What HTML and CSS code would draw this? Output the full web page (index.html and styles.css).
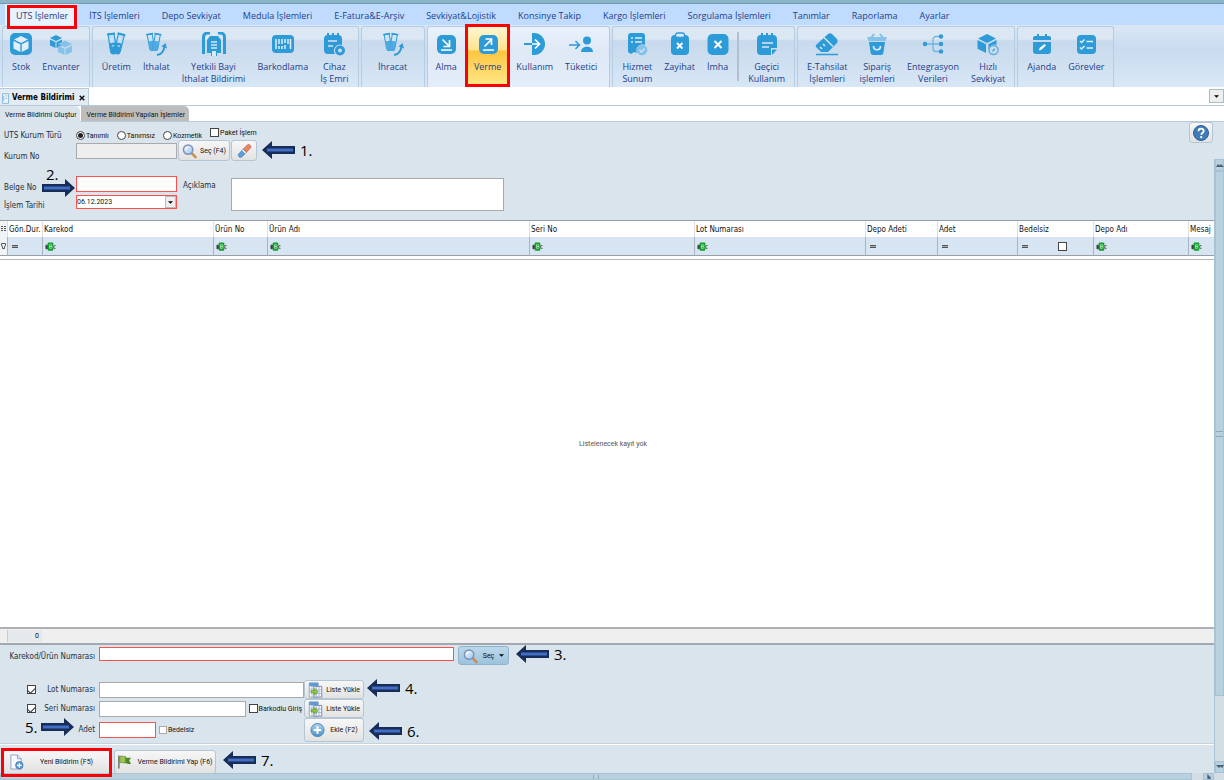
FILE: index.html
```html
<!DOCTYPE html>
<html lang="tr">
<head>
	<meta charset="utf-8">
	<title>Verme Bildirimi</title>
	<link rel="stylesheet" href="styles.css">
</head>
<body>
	<!-- shared drawings -->
	<svg class="defs" width="0" height="0" aria-hidden="true">
		<defs>
			<linearGradient id="lens" x1="0" y1="0" x2="1" y2="1"><stop offset="0" stop-color="#f4faff"/><stop offset="1" stop-color="#9cc3ee"/></linearGradient>
			<linearGradient id="ball" x1="0" y1="0" x2="0" y2="1"><stop offset="0" stop-color="#a9d3ef"/><stop offset="1" stop-color="#4c92c9"/></linearGradient>
			<symbol id="search" viewBox="0 0 16 16"><path d="M10 10l4.500 4.500" stroke="#c98d4a" stroke-width="2.600" stroke-linecap="round"/><circle cx="6.500" cy="6.500" r="5" fill="url(#lens)" stroke="#7d92bd" stroke-width="1.600"/><path d="M4 6.500a2.500 2.500 0 0 1 2.500-2.500" fill="none" stroke="#fff" stroke-width="1.200"/></symbol>
			<symbol id="list" viewBox="0 0 16 18"><path d="M1 1h10v16H1z" fill="#fff" stroke="#8fa0bd"/><path d="M1 1h10v4H1z" fill="#5c9bd4"/><path d="M6 5h9v12H6z" fill="#f4f7fd" stroke="#6f83ad"/><path d="M6 9h9M6 13h9M9 5v12M12 5v12M1 8h5M1 11h5M4 5v12" stroke="#93a6cc" stroke-width=".8"/><path d="M3 9.500h4v-2.500l4 4-4 4v-2.500H3z" fill="#8ac43a" stroke="#5c8e20" stroke-width=".6"/></symbol>
			<symbol id="abc" viewBox="0 0 12 9"><path d="M1 3h2v4H1zM9.500 3.500h2M9.500 3.500v3M9.500 6.500h2" fill="#444" stroke="#333" stroke-width=".8"/><rect x="3" y="0" width="6" height="9" rx="1" fill="#12a02c"/><path d="M5 2.500h1.500a1 1 0 0 1 0 2h-1.500zM5 4.500h1.700a1 1 0 0 1 0 2H5z" fill="none" stroke="#b9f0c0" stroke-width=".8"/></symbol>
			<symbol id="arrow" viewBox="0 0 33 18"><path d="M0 9L10 0v5h23v8H10v5z" fill="#172c56"/><path d="M5 7.500h26v3H5z" fill="#416fc6"/></symbol>
			<symbol id="tubes" viewBox="0 0 24 24"><g transform="rotate(-8 8 12)"><path d="M5.500 2h6v17a3 3 0 0 1-6 0z" fill="#c3dff3" stroke="#2d9bd8" stroke-width="1.200"/><path d="M5.500 11h6v8a3 3 0 0 1-6 0z" fill="#2d9bd8"/><path d="M4.500 2h8" stroke="#2d9bd8" stroke-width="2"/><path d="M6.500 7h2.500M7.500 14h2.500" stroke="#e3eefa" stroke-width="1"/></g><g transform="rotate(14 15 12)"><path d="M12 2h6v17a3 3 0 0 1-6 0z" fill="#c3dff3" stroke="#2d9bd8" stroke-width="1.200"/><path d="M12 11h6v8a3 3 0 0 1-6 0z" fill="#2d9bd8"/><path d="M11 2h8" stroke="#2d9bd8" stroke-width="2"/><path d="M13 7h2.500M14 14h2.500" stroke="#e3eefa" stroke-width="1"/></g></symbol>
			<symbol id="tubes-arrow" viewBox="0 0 24 24"><g transform="rotate(-10 7 10)"><path d="M4.500 2h5v14a2.500 2.500 0 0 1-5 0z" fill="#cfe5f5" stroke="#2d9bd8"/><path d="M4.500 9h5v7a2.500 2.500 0 0 1-5 0z" fill="#4fabe0"/><path d="M3.500 2h7" stroke="#2d9bd8" stroke-width="1.600"/></g><g transform="rotate(10 12 10)"><path d="M10 2h5v14a2.500 2.500 0 0 1-5 0z" fill="#cfe5f5" stroke="#2d9bd8"/><path d="M10 9h5v7a2.500 2.500 0 0 1-5 0z" fill="#4fabe0"/><path d="M9 2h7" stroke="#2d9bd8" stroke-width="1.600"/></g><path d="M13 23c4-.5 7-4 7.500-9" fill="none" stroke="#2d9bd8" stroke-width="2"/><path d="M17.500 14.500L21.500 11l1.500 5.500z" fill="#2d9bd8"/></symbol>
		</defs>
	</svg>

	<div class="app">
		<nav class="menu">
			<button class="menu-tab is-active is-marked">UTS İşlemler</button>
			<button class="menu-tab">İTS İşlemleri</button>
			<button class="menu-tab">Depo Sevkiyat</button>
			<button class="menu-tab">Medula İşlemleri</button>
			<button class="menu-tab">E-Fatura&amp;E-Arşiv</button>
			<button class="menu-tab">Sevkiyat&amp;Lojistik</button>
			<button class="menu-tab">Konsinye Takip</button>
			<button class="menu-tab">Kargo İşlemleri</button>
			<button class="menu-tab">Sorgulama İşlemleri</button>
			<button class="menu-tab">Tanımlar</button>
			<button class="menu-tab">Raporlama</button>
			<button class="menu-tab">Ayarlar</button>
		</nav>

		<div class="ribbon">
			<div class="group">
				<button class="tool"><svg viewBox="0 0 24 24"><rect x="1" y="1" width="22" height="22" rx="5" fill="#2d9bd8"/><path d="M12 4l7 3.500-7 3.500-7-3.500zM4.500 9l6.800 3.300V20L4.500 16.500zM19.500 9l-6.800 3.300V20l6.800-3.500z" fill="#e3eefa"/></svg>Stok</button>
				<button class="tool"><svg viewBox="0 0 24 24"><path d="M7 3l6 3-6 3-6-3zM1 7.500l5.500 2.700V16L1 13.500zM13 7.500l-5.500 2.700V16l5.500-2.500z" fill="#2d9bd8"/><path d="M16 8.500l7 3.500-7 3.500L9 12zM9 13.500l6.500 3.200V23L9 20zM23 13.500l-6.500 3.200V23l6.500-3z" fill="#86c1e8"/></svg>Envanter</button>
			</div>
			<div class="group">
				<button class="tool"><svg><use href="#tubes"/></svg>Üretim</button>
				<button class="tool"><svg><use href="#tubes-arrow"/></svg>İthalat</button>
				<button class="tool"><svg viewBox="0 0 24 24"><path d="M1.500 22V5a4 4 0 0 1 4-4H8M22.500 22V5a4 4 0 0 0-4-4H16" fill="none" stroke="#2d9bd8" stroke-width="3"/><path d="M5 21V8l3-4h8l3 4v13h-4v3H9v-3z" fill="#2d9bd8"/><path d="M9 10h6M9 13h6M9 16h6" stroke="#dbe8f6" stroke-width="1.500"/><path d="M10 19h4v5h-4z" fill="#dbe8f6"/></svg>Yetkili Bayi<br>İthalat Bildirimi</button>
				<button class="tool"><svg viewBox="0 0 24 24"><rect x="1" y="3" width="22" height="18" rx="4" fill="#2d9bd8"/><path d="M5 7v10M8 7v5M8 14v3M11 7v5M11 14v3M14 7v4M14 13v4M17 7v5M19.500 7v10" stroke="#e3eefa" stroke-width="1.500"/></svg>Barkodlama</button>
				<button class="tool"><svg viewBox="0 0 24 24"><path d="M2 7a4 4 0 0 1 4-4h10a4 4 0 0 1 4 4v6a6 6 0 0 0-7 9H6a4 4 0 0 1-4-4z" fill="#2d9bd8"/><path d="M6 1v4M11 1v4M16 1v4" stroke="#2d9bd8" stroke-width="2"/><path d="M6 9h9M6 14h5" stroke="#d3e4f5" stroke-width="1.500"/><circle cx="18" cy="18.500" r="3.500" fill="none" stroke="#2d9bd8" stroke-width="3"/></svg>Cihaz<br>İş Emri</button>
			</div>
			<div class="group group-single">
				<button class="tool"><svg><use href="#tubes-arrow"/></svg>İhracat</button>
			</div>
			<div class="group group-light">
				<button class="tool"><svg viewBox="0 0 24 24"><rect x="3" y="3" width="19" height="19" rx="5" fill="#2d9bd8"/><path d="M8.500 7.500l7 7M15.500 8v6.500H9.500M7 18h11" fill="none" stroke="#fff" stroke-width="1.700"/></svg>Alma</button>
				<button class="tool is-active is-marked"><svg viewBox="0 0 24 24"><rect x="3" y="3" width="19" height="19" rx="5" fill="#2d9bd8"/><path d="M8.500 14.500l7-7M9.500 7h6v6M7 18h11" fill="none" stroke="#fff" stroke-width="1.700"/></svg>Verme</button>
				<button class="tool"><svg viewBox="0 0 24 24"><path d="M9 1h2a11 11 0 0 1 0 22H9z" fill="#2d9bd8"/><path d="M1 12h8" stroke="#2d9bd8" stroke-width="2"/><path d="M9 12h7M12 7.500l4.500 4.500-4.500 4.500" fill="none" stroke="#fff" stroke-width="1.700"/></svg>Kullanım</button>
				<button class="tool"><svg viewBox="0 0 24 24"><path d="M0 13h10M6.500 9l4 4-4 4" fill="none" stroke="#2d9bd8" stroke-width="1.500"/><circle cx="18" cy="8.500" r="4" fill="#2d9bd8"/><path d="M12 20c0-7 12-7 12 0z" fill="#2d9bd8"/></svg>Tüketici</button>
			</div>
			<div class="group">
				<button class="tool"><svg viewBox="0 0 24 24"><path d="M3 4a3 3 0 0 1 3-3h11a3 3 0 0 1 3 3v9a6 6 0 0 0-8 8l-3-1-3 2-3-2z" fill="#2d9bd8"/><path d="M6 6h2M10 6h7M6 10h2M10 10h7" stroke="#e3eefa" stroke-width="1.400"/><circle cx="17" cy="18" r="5.300" fill="#86c1e8"/><path d="M14.500 18l2 2 3-3.500" fill="none" stroke="#d3e4f5" stroke-width="1.300"/></svg>Hizmet<br>Sunum</button>
				<button class="tool"><svg viewBox="0 0 24 24"><rect x="3" y="3" width="18" height="20" rx="4" fill="#2d9bd8"/><rect x="7.500" y="1" width="9" height="4.500" rx="2" fill="#dbe8f6" stroke="#2d9bd8" stroke-width="1.300"/><path d="M9 11l5.500 5.500M14.500 11L9 16.500" stroke="#fff" stroke-width="1.800"/></svg>Zayihat</button>
				<button class="tool"><svg viewBox="0 0 24 24"><rect x="1.500" y="2" width="21" height="21" rx="5" fill="#2d9bd8"/><path d="M8.500 9l7 7M15.500 9l-7 7" stroke="#fff" stroke-width="2"/></svg>İmha</button>
				<span class="divider"></span>
				<button class="tool"><svg viewBox="0 0 24 24"><path d="M2 7a4 4 0 0 1 4-4h12a4 4 0 0 1 4 4v9h-6v7H6a4 4 0 0 1-4-4z" fill="#2d9bd8"/><path d="M7 1v4M12 1v4M17 1v4" stroke="#2d9bd8" stroke-width="2"/><path d="M7 11h11M7 15h7" stroke="#dbe8f6" stroke-width="1.600"/><path d="M17 23v-5.500h5z" fill="#2d9bd8"/></svg>Geçici<br>Kullanım</button>
			</div>
			<div class="group">
				<button class="tool"><svg viewBox="0 0 24 24"><path d="M1 13L13 2q2-1.500 4 0l5 5q1.500 2 0 4l-9 9H6l-5-5q-.5-1 0-2z" fill="#2d9bd8"/><path d="M9 5.500l9 9M5 15l2 2M8 12l2 2" stroke="#d3e4f5" stroke-width="1.500"/><path d="M1 22.500h22" stroke="#2d9bd8" stroke-width="1.500"/></svg>E-Tahsilat<br>İşlemleri</button>
				<button class="tool"><svg viewBox="0 0 24 24"><path d="M6 6l3-4M18 6l-3-4" stroke="#7fbfe8" stroke-width="2"/><path d="M2 5h20l-1.500 4h-17z" fill="#86c1e8"/><path d="M4 10h16l-1.500 10a3 3 0 0 1-3 3h-7a3 3 0 0 1-3-3z" fill="#2d9bd8"/><path d="M8.500 14c0 5 7 5 7 0" fill="none" stroke="#e3eefa" stroke-width="1.700"/></svg>Sipariş<br>işlemleri</button>
				<button class="tool"><svg viewBox="0 0 24 24"><path d="M4 12h17M20 4.500h-5a3 3 0 0 0-3 3v9a3 3 0 0 0 3 3h5" fill="none" stroke="#6bb5e3" stroke-width="1.300"/><g fill="#2d9bd8"><circle cx="4" cy="12" r="2.200"/><circle cx="20" cy="4.500" r="2.200"/><circle cx="20" cy="12" r="2.200"/><circle cx="20" cy="19.500" r="2.200"/></g></svg>Entegrasyon<br>Verileri</button>
				<button class="tool"><svg viewBox="0 0 24 24"><path d="M11 2l9 4.500-9 4.500-9-4.500zM1.500 8l8.500 4.300V21l-8.500-4.300zM20.500 8v5a6 6 0 0 0-8 5.500V12.300z" fill="#2d9bd8"/><circle cx="17.500" cy="18" r="4.500" fill="#c8ddf2" stroke="#5fb0e1" stroke-width="1.500"/><path d="M16 20l1-2.500 2.300-1.500-1 2.500z" fill="#2d9bd8"/></svg>Hızlı<br>Sevkiyat</button>
			</div>
			<div class="group">
				<button class="tool"><svg viewBox="0 0 24 24"><path d="M3 6a2 2 0 0 1 2-2h14a2 2 0 0 1 2 2v2H3zM3 10h18v9a3 3 0 0 1-3 3H6a3 3 0 0 1-3-3z" fill="#2d9bd8"/><path d="M8 2v3M16 2v3" stroke="#2d9bd8" stroke-width="2"/><path d="M9 18.500l.5-2.500 5-4 1.500 1.500-5 4.500z" fill="#fff"/></svg>Ajanda</button>
				<button class="tool"><svg viewBox="0 0 24 24"><rect x="3" y="3" width="19" height="19" rx="4" fill="#2d9bd8"/><path d="M6 9l1.500 1.500L10.500 7.500M6 15.500L7.500 17l3-3M12.500 9.500H19M12.500 16H19" fill="none" stroke="#e3eefa" stroke-width="1.500"/></svg>Görevler</button>
			</div>
		</div>

		<div class="documents">
			<div class="document">
				<svg viewBox="0 0 8 12"><path d="M.5.5h7v11h-7z" fill="#eef6ff" stroke="#7fb2de"/><path d="M2 3v6M4 3h2M4 6h2" stroke="#7fb2de"/></svg>
				<b>Verme Bildirimi</b>
				<button class="close" aria-label="Kapat"><svg viewBox="0 0 6 6"><path d="M.7.7l4.600 4.600M5.300.7L.7 5.300" stroke="#111" stroke-width="1.400"/></svg></button>
			</div>
			<button class="documents-more" aria-label="Pencereler"><svg viewBox="0 0 6 3"><path d="M0 0h6L3 3z"/></svg></button>
		</div>

		<div class="pages">
			<button class="page-tab is-active">Verme Bildirimi Oluştur</button>
			<button class="page-tab">Verme Bildirimi Yapılan İşlemler</button>
		</div>

		<div class="work">
			<main class="content">
				<form class="head">
					<div class="head-fields">
						<span class="label">UTS Kurum Türü</span>
						<div class="choices">
							<label><input type="radio" name="tur" checked>Tanımlı</label>
							<label><input type="radio" name="tur">Tanımsız</label>
							<label><input type="radio" name="tur">Kozmetik</label>
							<label class="package"><input type="checkbox">Paket İşlem</label>
						</div>
						<label class="label" for="kurum">Kurum No</label>
						<div class="line">
							<input class="field field-off" id="kurum" type="text" disabled>
							<button class="btn" type="button"><svg class="icon"><use href="#search"/></svg>Seç (F4)</button>
							<button class="btn btn-erase" type="button" aria-label="Temizle"><svg class="icon" viewBox="0 0 16 16"><path d="M1.500 11.500Q1 13 2 14t3 .5L10 9.500 6.500 6z" fill="#5aa0e0" stroke="#3d78b4" stroke-width=".7"/><path d="M6.500 6L11 1.500q1.500-1 2.800 0t1 2.800L10 9.500z" fill="#e58567" stroke="#b86450" stroke-width=".7"/><path d="M5.800 6.800l3.500 3.500" stroke="#fff" stroke-width="1.400"/></svg></button>
						</div>
					</div>
					<button class="btn btn-help" type="button" aria-label="Yardım"><svg viewBox="0 0 16 16"><circle cx="8" cy="8" r="7.500" fill="#3f7cb8" stroke="#2d5f95"/><path d="M5.500 6.200c0-3.400 5.200-3.200 5.200-.3 0 2-2.500 2-2.500 3.800" fill="none" stroke="#fff" stroke-width="1.800"/><circle cx="8.200" cy="12.200" r="1.100" fill="#fff"/></svg></button>
					<div class="head-fields head-document">
						<label class="label" for="belge">Belge No</label>
						<input class="field is-required" id="belge" type="text">
						<label class="label" for="tarih">İşlem Tarihi</label>
						<div class="date">
							<select class="field is-required" id="tarih"><option>06.12.2023</option></select>
							<span class="date-arrow"><svg viewBox="0 0 6 3"><path d="M0 0h6L3 3z"/></svg></span>
						</div>
					</div>
					<div class="note">
						<label class="label" for="aciklama">Açıklama</label>
						<textarea class="field" id="aciklama"></textarea>
					</div>
					<div class="callout callout-1"><svg><use href="#arrow"/></svg>1.</div>
					<div class="callout callout-2"><span>2.</span><svg class="flip"><use href="#arrow"/></svg></div>
				</form>

				<div class="list">
					<table class="grid">
						<colgroup>
							<col class="w-mark"><col class="w-status"><col class="w-code"><col class="w-no"><col class="w-name"><col class="w-serial"><col class="w-code"><col class="w-count"><col class="w-qty"><col class="w-free"><col class="w-depot"><col class="w-message">
						</colgroup>
						<thead>
							<tr>
								<th class="mark"><svg viewBox="0 0 5 8"><path d="M0 1.500h2M0 3.500h2M0 5.500h2M3 1.500h2M3 3.500h2M3 5.500h2" stroke="#555"/></svg></th>
								<th>Gön.Dur.</th><th>Karekod</th><th>Ürün No</th><th>Ürün Adı</th><th>Seri No</th><th>Lot Numarası</th><th>Depo Adeti</th><th>Adet</th><th>Bedelsiz</th><th>Depo Adı</th><th>Mesaj</th>
							</tr>
						</thead>
						<tbody>
							<tr>
								<td class="mark"><svg viewBox="0 0 5 8"><path d="M.5 1.500h4v1.500L3.500 5v1.500h-2V5L.5 3z" fill="none" stroke="#555"/></svg></td>
								<td><span class="equal"></span></td>
								<td><svg class="abc"><use href="#abc"/></svg></td>
								<td><svg class="abc"><use href="#abc"/></svg></td>
								<td><svg class="abc"><use href="#abc"/></svg></td>
								<td><svg class="abc"><use href="#abc"/></svg></td>
								<td><svg class="abc"><use href="#abc"/></svg></td>
								<td><span class="equal"></span></td>
								<td><span class="equal"></span></td>
								<td><span class="filter"><span class="equal"></span><input type="checkbox" aria-label="Bedelsiz"></span></td>
								<td><svg class="abc"><use href="#abc"/></svg></td>
								<td><svg class="abc"><use href="#abc"/></svg></td>
							</tr>
						</tbody>
					</table>
					<div class="empty">Listelenecek kayıt yok</div>
					<div class="total"><span>0</span></div>
				</div>

				<form class="entry">
					<label class="label" for="karekod">Karekod/Ürün Numarası</label>
					<div class="line line-code">
						<input class="field is-required field-code" id="karekod" type="text">
						<button class="btn btn-blue" type="button"><svg class="icon"><use href="#search"/></svg>Seç<svg class="caret" viewBox="0 0 6 3"><path d="M0 0h6L3 3z"/></svg></button>
					</div>
					<label class="label label-check"><input type="checkbox" checked><span>Lot Numarası</span></label>
					<div class="line">
						<input class="field field-lot" type="text" aria-label="Lot Numarası">
						<button class="btn" type="button"><svg class="icon"><use href="#list"/></svg>Liste Yükle</button>
					</div>
					<label class="label label-check"><input type="checkbox" checked><span>Seri Numarası</span></label>
					<div class="line">
						<div class="slot">
							<input class="field" type="text" aria-label="Seri Numarası">
							<label class="option"><input type="checkbox">Barkodlu Giriş</label>
						</div>
						<button class="btn" type="button"><svg class="icon"><use href="#list"/></svg>Liste Yükle</button>
					</div>
					<label class="label" for="adet">Adet</label>
					<div class="line">
						<div class="slot">
							<input class="field is-required field-qty" id="adet" type="text">
							<label class="option option-free"><input type="checkbox">Bedelsiz</label>
						</div>
						<button class="btn btn-add" type="button"><svg class="icon" viewBox="0 0 16 16"><circle cx="8" cy="8" r="7" fill="url(#ball)" stroke="#4a84b5"/><path d="M8 4v8M4 8h8" stroke="#fff" stroke-width="2.200"/></svg>Ekle (F2)</button>
					</div>
					<div class="callout callout-3"><svg><use href="#arrow"/></svg>3.</div>
					<div class="callout callout-4"><svg><use href="#arrow"/></svg>4.</div>
					<div class="callout callout-5">5.<svg class="flip"><use href="#arrow"/></svg></div>
					<div class="callout callout-6"><svg><use href="#arrow"/></svg>6.</div>
				</form>

				<div class="actions">
					<button class="btn btn-new is-marked" type="button"><svg class="icon" viewBox="0 0 16 16"><path d="M2 .5h7l4 4v11H2z" fill="#f6f9ff" stroke="#8f9dc0"/><path d="M9 .5v4h4" fill="#dce5f5" stroke="#8f9dc0"/><circle cx="11" cy="11.500" r="4" fill="#5b9bd5" stroke="#3c78b0" stroke-width=".8"/><path d="M11 9v5M8.500 11.500h5" stroke="#fff" stroke-width="1.300"/></svg><span>Yeni Bildirim (F5)</span></button>
					<button class="btn btn-send" type="button"><svg class="icon" viewBox="0 0 16 16"><path d="M2 1v14" stroke="#6b7766" stroke-width="1.600"/><path d="M3 2c3-1.500 4 1 6 0v7c-2 1-3-1.500-6 0z" fill="#9cc653" stroke="#46751a" stroke-width=".6"/><path d="M9 3c2 .8 4 .6 6 .3l-2 3L15 10c-2 .3-4 .3-6-1z" fill="#4c8a22"/></svg>Verme Bildirimi Yap (F6)</button>
					<div class="callout callout-7"><svg><use href="#arrow"/></svg>7.</div>
				</div>
			</main>

			<div class="vscroll">
				<span class="vscroll-up"><svg viewBox="0 0 8 4"><path d="M0 4l2-3 1.500 1.500L5 1l3 3z"/></svg></span>
				<span class="vscroll-thumb"></span>
				<span class="vscroll-down"><svg viewBox="0 0 8 4"><path d="M0 0h8L6 3 4.500 1.500 3 3z"/></svg></span>
			</div>
		</div>

		<div class="hscroll">
			<span class="hscroll-thumb"></span>
			<span class="hscroll-right"><svg viewBox="0 0 4 6"><path d="M0 0l4 4v2H0z"/></svg></span>
		</div>
	</div>
</body>
</html>
```
FILE: styles.css
```css
* {
	box-sizing: border-box;
}
body {
	margin: 0;
	font-family: Roboto, "Liberation Sans", sans-serif;
	font-size: 7px;
	line-height: 12px;
	color: #111;
}
button, input, select, textarea {
	margin: 0;
	padding: 0;
	font: inherit;
	color: inherit;
}
button {
	border: 0;
	background: none;
	white-space: nowrap;
}
svg {
	display: block;
	flex: none;
}
.defs {
	position: absolute;
}
.app {
	display: flex;
	flex-direction: column;
	min-height: 100vh;
	border-top: 3px solid #8db5c9;
	background: #dae4ec;
}
.is-marked {
	position: relative;
}
.is-marked::after {
	content: "";
	position: absolute;
	z-index: 2;
	inset: 1px 1px -4px 2px;
	border: 3px solid #fb0007;
}

/* menu and ribbon */
.menu {
	display: flex;
	height: 22px;
	padding-left: 5px;
	border-top: 1px solid #6f9cb5;
	background: #bfdbff;
}
.menu-tab {
	padding: 2px 11px 0;
	font-family: "Open Sans", sans-serif;
	font-size: 9px;
	color: #1e3f8a;
}
.menu-tab.is-active {
	padding-right: 10px;
	background: #e9f1fb;
}
.ribbon {
	display: flex;
	gap: 2px;
	height: 62px;
	padding: 1px 2px 0;
	background: linear-gradient(#dae7f5, #c9dbef 40%, #d9e8f7);
}
.group {
	display: flex;
	padding: 0 3px;
	border: 1px solid #b4cde2;
	border-bottom: 0;
	border-radius: 3px 3px 0 0;
	background: linear-gradient(#dce7f4, #dce7f4 12px, #c7d9ec 14px, #d8e7f6);
}
.group-single {
	justify-content: center;
	width: 64px;
}
.group-light {
	padding: 0 6px 0 2px;
	background: linear-gradient(#e9f1fa, #dfe9f6 40%, #e4eefa);
}
.tool {
	display: flex;
	flex-direction: column;
	align-items: center;
	padding: 5px 6px 0;
	font-family: "Open Sans", sans-serif;
	font-size: 9px;
	line-height: 12px;
	text-align: center;
	color: #1e3f8a;
}
.tool svg {
	width: 24px;
	height: 24px;
	margin: 0 -3px 5px;
}
.tool.is-active {
	margin: 0 2px 0 4px;
	padding: 5px 7px 0;
	background: linear-gradient(#fff6d0, #ffe48f 38%, #fdc540 40%, #ffe98a);
}
.tool.is-marked::after {
	inset: -3px -2px 0;
}
.divider {
	width: 2px;
	margin: 5px 3px 6px;
	background: #b3bfcd;
}

/* open documents */
.documents {
	display: flex;
	justify-content: space-between;
	align-items: end;
	height: 19px;
	border-bottom: 1px solid #b5cbdb;
	background: #fff;
}
.document {
	display: flex;
	align-items: center;
	gap: 3px;
	height: 17px;
	padding: 2px 3px 0 2px;
	border: 1px solid #b5cbdb;
	border-width: 1px 1px 0 0;
	background: #e3ecf4;
}
.document svg {
	width: 7px;
	height: 11px;
}
.document b {
	font-family: "DejaVu Sans Condensed", "DejaVu Sans", sans-serif;
	font-size: 8px;
	color: #000;
}
.document .close svg {
	width: 6px;
	height: 6px;
	margin: 0 0 0 2px;
}
.documents-more {
	display: grid;
	place-items: center;
	align-self: center;
	width: 15px;
	height: 14px;
	border: 1px solid #a5bccb;
	background: #eee;
}
.documents-more svg, .date-arrow svg, .caret {
	width: 5px;
	height: 3px;
}
.pages {
	display: flex;
	gap: 1px;
	height: 16px;
	background: #fff;
	border-bottom: 1px solid #b5cbdb;
}
.page-tab {
	height: 15px;
	padding: 2px 4px 0 6px;
	border-radius: 0 5px 0 0;
	background: #bdbdbd;
}
.page-tab.is-active {
	height: 16px;
	padding: 1px 3px 0 5px;
	background: #dae4ec;
}

/* work area */
.work {
	display: flex;
	flex: 1;
}
.content {
	display: flex;
	flex: 1;
	flex-direction: column;
	min-width: 0;
}
.label {
	font-family: "DejaVu Sans Condensed", "DejaVu Sans", sans-serif;
	font-size: 8px;
	white-space: nowrap;
	color: #23303c;
}
.field {
	min-width: 0;
	border: 1px solid #aaa;
	border-radius: 0;
	outline: 0;
	background: #fff;
}
.field-off {
	background: #eee;
}
.is-required {
	border-color: #ff5050;
}
input[type="checkbox"], input[type="radio"] {
	display: grid;
	flex: none;
	place-items: center;
	width: 9px;
	height: 9px;
	border: 1px solid #444;
	background: #fff;
	appearance: none;
}
input[type="radio"] {
	border-radius: 50%;
}
input[type="radio"]:checked::before {
	content: "";
	width: 5px;
	height: 5px;
	border-radius: 50%;
	background: #222;
}
input[type="checkbox"]:checked::before {
	content: "";
	width: 6px;
	height: 3px;
	border: solid #333;
	border-width: 0 0 1px 1px;
	transform: rotate(-45deg);
}
.line {
	display: flex;
	align-items: center;
}
.btn {
	display: flex;
	align-items: center;
	justify-content: center;
	gap: 3px;
	border: 1px solid #b4c6d3;
	border-radius: 3px;
	background: linear-gradient(#f7f7f7, #e2e2e2);
}
.icon {
	width: 15px;
	height: 16px;
}

.head {
	position: relative;
	display: grid;
	grid-template-columns: 177px 1fr auto;
	row-gap: 15px;
	height: 98px;
	padding: 0 1px 9px 4px;
}
.head-fields {
	display: grid;
	grid-template-columns: 72px 1fr;
	grid-template-rows: 18px 21px;
	align-items: center;
	grid-column: 1 / 3;
}
.head-fields .label {
	align-self: end;
	line-height: 8px;
}
.choices {
	display: flex;
	gap: 8px;
	padding-top: 9px;
}
.choices label, .option {
	display: flex;
	align-items: center;
	gap: 1px;
	white-space: nowrap;
}
.choices .package {
	margin-top: -6px;
}
.head .line .field {
	width: 101px;
	height: 16px;
}
.head .line .btn {
	width: 52px;
	height: 21px;
	margin-left: 1px;
}
.head .line .btn-erase {
	width: 26px;
}
.head .btn-help {
	width: 24px;
	height: 21px;
}
.btn-help svg {
	width: 16px;
	height: 16px;
}
.head-document {
	grid-column: 1;
	grid-template-rows: 16px 16px;
	row-gap: 2px;
}
.head-document .field {
	width: 101px;
	height: 16px;
}
.date {
	position: relative;
	width: 101px;
}
.head-document .date .field {
	display: block;
	height: 14px;
	appearance: none;
}
.date-arrow {
	position: absolute;
	top: 1px;
	right: 1px;
	display: grid;
	place-items: center;
	width: 11px;
	height: 12px;
	border: 1px solid #bbb;
	background: #eee;
	pointer-events: none;
}
.note {
	display: flex;
	grid-column: 2 / 4;
	gap: 15px;
	padding: 2px 0 0 2px;
}
.note .label {
	padding-top: 2px;
}
.note .field {
	width: 273px;
	height: 33px;
	resize: none;
}

/* record list */
.list {
	display: flex;
	flex: 1;
	flex-direction: column;
	background: #fff;
}
.grid {
	width: 100%;
	border-top: 1px solid #999ea6;
	border-bottom: 1px solid #b5b5b5;
	border-spacing: 0;
	table-layout: fixed;
	font-family: "DejaVu Sans Condensed", "DejaVu Sans", sans-serif;
	font-size: 8px;
}
.grid th, .grid td {
	height: 16px;
	padding: 1px 1px 0;
	border-left: 1px solid #e0e0e0;
	font-weight: normal;
	text-align: left;
	white-space: nowrap;
}
.grid td {
	height: 19px;
	padding: 0 1px 0 2px;
	border-left-color: #aab4c0;
	border-bottom: 1px solid #999ea6;
	background: #d7e5f3;
}
.grid .mark {
	padding: 0 1px;
	border-left: 0;
	background: #f1f4f7;
}
.grid tbody {
	line-height: 0;
}
.grid tbody::after {
	content: "";
	display: block;
	height: 3px;
}
.mark svg {
	width: 5px;
	height: 8px;
}
.abc {
	width: 11px;
	height: 9px;
}
.equal {
	display: block;
	width: 6px;
	height: 3px;
	margin-left: 2px;
	border: solid #555;
	border-width: 1px 0;
	background: #aaa;
}
.filter {
	display: flex;
	align-items: center;
	gap: 30px;
}
.w-mark { width: 7px; }
.w-status { width: 35px; }
.w-code { width: 171px; }
.w-no { width: 54px; }
.w-serial { width: 165px; }
.w-count { width: 72px; }
.w-qty { width: 80px; }
.w-free { width: 76px; }
.w-depot { width: 95px; }
.w-message { width: 26px; }
.empty {
	display: grid;
	flex: 1;
	place-items: center;
	padding-left: 12px;
	color: #555;
}
.total {
	height: 18px;
	padding: 1px 0 0 7px;
	border-top: 2px solid #b0b0b4;
	border-bottom: 2px solid #a2a8b2;
	background: #efefef;
}
.total span {
	display: block;
	width: 35px;
	padding-right: 3px;
	border-left: 1px solid #ccc;
	text-align: right;
	background: #e5e9eb;
}

/* product entry */
.entry {
	position: relative;
	display: grid;
	grid-template-columns: 95px 1fr;
	grid-template-rows: 34px 19px 19px 24px;
	column-gap: 4px;
	align-items: center;
	height: 99px;
	padding-top: 1px;
	border-bottom: 1px solid #c5d3dd;
}
.entry .label {
	text-align: right;
}
.entry .label-check {
	display: flex;
	align-items: center;
	justify-content: space-between;
	padding-left: 27px;
}
.entry > :nth-child(-n+2) {
	align-self: start;
}
.entry > .label:first-child {
	padding-top: 5px;
}
.entry .line-code {
	align-items: start;
}
.entry .field {
	height: 16px;
}
.entry .field-code {
	width: 355px;
	height: 14px;
	margin: 1px 4px 0 0;
}
.entry .field-lot {
	width: 205px;
}
.slot {
	display: flex;
	align-items: center;
	gap: 3px;
	width: 205px;
	padding-right: 2px;
}
.slot .field {
	flex: 1;
}
.slot .field-qty {
	flex: none;
	width: 57px;
}
.option-free input {
	width: 8px;
	height: 8px;
	border-color: #aaa;
}
.entry .btn {
	width: 60px;
	height: 19px;
}
.entry .btn-add {
	height: 24px;
	gap: 5px;
}
.entry .btn-blue {
	width: 51px;
	gap: 5px;
	border-color: #8fb4cb;
	background: linear-gradient(#bcd8ea, #9dc3dc);
}
.actions {
	position: relative;
	display: flex;
	gap: 3px;
	height: 29px;
	padding: 5px 3px 0;
	border-top: 1px solid #fff;
}
.actions .btn {
	height: 24px;
}
.actions .btn-new {
	justify-content: start;
	width: 108px;
	padding: 0 4px 0 5px;
}
.btn-new span {
	flex: 1;
}
.btn-new.is-marked::after {
	inset: -3px -2px -4px -3px;
}
.actions .btn-send {
	gap: 5px;
	width: 102px;
}

/* step arrows laid over the window */
.callout {
	position: absolute;
	z-index: 3;
	display: flex;
	align-items: center;
	gap: 5px;
	font-family: "Open Sans", sans-serif;
	font-size: 15px;
	line-height: 18px;
	color: #000;
}
.callout svg {
	width: 33px;
	height: 18px;
}
.flip {
	transform: scaleX(-1);
}
.callout-1 { left: 262px; top: 19px; }
.callout-2 {
	left: 42px;
	top: 43px;
	flex-direction: column;
	align-items: start;
	gap: 0;
}
.callout-2 span {
	margin: 0 0 -4px 4px;
}
.callout-3 { left: 516px; top: 0; }
.callout-4 { left: 367px; top: 34px; }
.callout-5 { left: 25px; top: 73px; gap: 3px; }
.callout-6 { left: 369px; top: 77px; }
.callout-7 { left: 223px; top: 6px; }

/* scroll bars */
.vscroll {
	display: flex;
	flex-direction: column;
	width: 10px;
	margin-top: 37px;
	border-left: 1px solid #a9c5d4;
	background: #d2dee4;
}
.vscroll span, .hscroll span {
	display: grid;
	place-items: center;
	border: 1px solid #a5c3d3;
	background: #b9d0de;
}
.vscroll svg {
	width: 8px;
	height: 4px;
	fill: #4c6270;
}
.vscroll-up, .vscroll-down {
	height: 12px;
}
.vscroll .vscroll-thumb {
	flex: 1;
	margin-bottom: 65px;
}
.vscroll-thumb::before {
	content: "";
	width: 7px;
	height: 4px;
	border: solid #8fabbb;
	border-width: 1px 0;
}
.hscroll {
	display: flex;
	height: 7px;
	padding-right: 10px;
	background: #d2dee4;
}
.hscroll .hscroll-thumb {
	flex: 1;
	margin-right: 11px;
}
.hscroll-thumb::before {
	content: "";
	width: 4px;
	height: 4px;
	border: solid #8fabbb;
	border-width: 0 1px;
}
.hscroll-right {
	width: 11px;
}
.hscroll svg {
	width: 4px;
	height: 5px;
	fill: #4c6270;
}
```
